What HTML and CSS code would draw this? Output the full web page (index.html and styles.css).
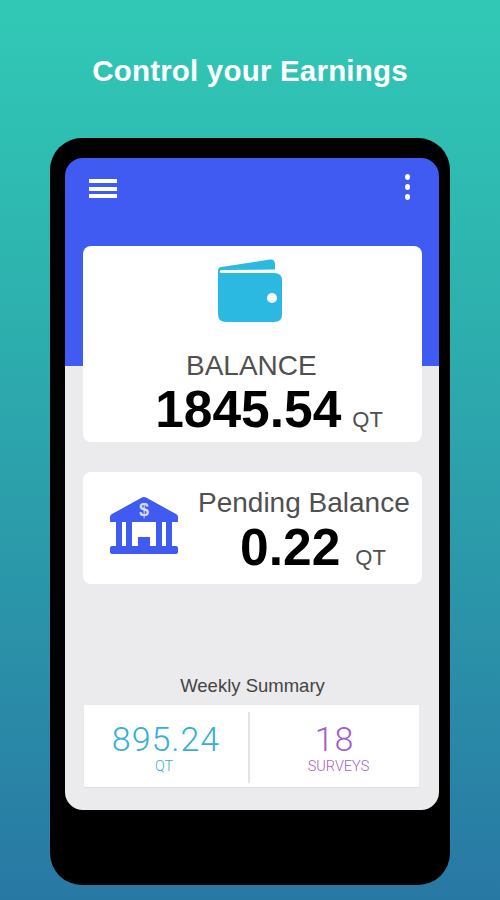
FILE: index.html
```html
<!DOCTYPE html>
<html lang="en">
<head>
	<meta charset="UTF-8">
	<meta name="viewport" content="width=device-width, initial-scale=1.0">
	<title>Control your Earnings</title>
	<link rel="stylesheet" href="styles.css">
</head>
<body>
	<h1 class="title">Control your Earnings</h1>
	<div class="phone">
		<div class="screen">
			<!-- top bar -->
			<div class="topbar">
				<div class="burger">
					<span></span>
					<span></span>
					<span></span>
				</div>
				<div class="dots">
					<span></span>
					<span></span>
					<span></span>
				</div>
			</div>
			<!-- balance -->
			<div class="card card_balance">
				<svg class="wallet" viewBox="0 0 64 64" width="64" height="64">
					<path fill="#2bb9e1" d="M0 11.500 Q0 8.500 3 8 L52 .6 Q56.500 0 57 5 V10.500 L4 11 Q1.500 11.200 1.500 12.500 Q1.500 14 4 14 H56 Q64 14 64 21 V56 Q64 63 56 63 H8 Q0 63 0 55 Z"/>
					<circle fill="#fff" cx="54" cy="39" r="5"/>
				</svg>
				<div class="balance_label">BALANCE</div>
				<div class="amount_row amount_row_big">
					<span class="amount">1845.54</span>
					<span class="unit">QT</span>
				</div>
			</div>
			<!-- pending -->
			<div class="card card_pending">
				<svg class="bank" viewBox="0 0 70 60" width="70" height="60">
					<path fill="#3f5bf2" d="M32 2 Q35 0 38 2 L67 18 Q69 19 69 21 V26 H1 V21 Q1 19 3 18 Z"/>
					<path fill="#3f5bf2" d="M7 26 H13 V52 H7 Z M17 26 H23 V52 H17 Z M47 26 H53 V52 H47 Z M57 26 H63 V52 H57 Z M29 41 H41 V52 H29 Z"/>
					<rect fill="#3f5bf2" x="1" y="50" width="68" height="8" rx="2"/>
					<text class="bank_sign" x="35" y="20" text-anchor="middle">$</text>
				</svg>
				<div class="pending_info">
					<div class="pending_label">Pending Balance</div>
					<div class="amount_row amount_row_small">
						<span class="amount">0.22</span>
						<span class="unit">QT</span>
					</div>
				</div>
			</div>
			<!-- weekly summary -->
			<div class="weekly_title">Weekly Summary</div>
			<div class="weekly">
				<div class="weekly_cell weekly_qt">
					<div class="weekly_num">895.24</div>
					<div class="weekly_sub">QT</div>
				</div>
				<div class="weekly_cell weekly_surveys">
					<div class="weekly_num">18</div>
					<div class="weekly_sub">SURVEYS</div>
				</div>
			</div>
		</div>
	</div>
</body>
</html>
```

FILE: styles.css
```css
* {
	padding: 0;
	margin: 0;
	box-sizing: border-box;
}
html, body {
	height: 900px;
	overflow: hidden;
}
body {
	background: linear-gradient(#31c9b6, #2db0ae 35%, #2878a4);
	font-family: "Liberation Sans", Arial, sans-serif;
	padding-top: 53px;
}
.title {
	color: #fff;
	font-size: 29.500px;
	font-weight: 700;
	line-height: 36px;
	letter-spacing: 0.200px;
	text-align: center;
}
/* phone frame */
.phone {
	width: 400px;
	height: 747px;
	margin: 49px 0 0 50px;
	padding: 20px 11px 0 15px;
	background: #000;
	border-radius: 32px;
}
.screen {
	height: 652px;
	padding: 0 17px 0 18px;
	border-radius: 18px;
	background: linear-gradient(#3f5bf2 208px, #ebeaec 208px);
	display: flex;
	flex-direction: column;
}
.topbar {
	height: 88px;
	padding: 16px 12px 0 6px;
	display: flex;
	justify-content: space-between;
	align-items: flex-start;
}
.burger {
	width: 28px;
	display: flex;
	flex-direction: column;
	gap: 3.500px;
	padding-top: 5px;
}
.burger span {
	height: 4px;
	background: #fff;
}
.dots {
	display: flex;
	flex-direction: column;
	gap: 4px;
}
.dots span {
	width: 5px;
	height: 6px;
	background: #fff;
	border-radius: 50%;
}
/* cards */
.card {
	width: 339px;
	background: #fff;
	border-radius: 8px;
}
.card_balance {
	height: 196px;
	padding-top: 13px;
	display: flex;
	flex-direction: column;
}
.wallet {
	align-self: center;
	margin-left: -5px;
}
.balance_label {
	margin: 27px 0 0 103px;
	font-size: 28px;
	line-height: 32px;
	color: #505050;
}
.amount_row {
	display: flex;
	align-items: baseline;
	justify-content: center;
	gap: 11px;
}
.amount_row_big {
	margin: -3px 0 0 33px;
}
.amount_row_small {
	margin: 3px 0 0 18px;
	gap: 15px;
}
.amount {
	font-size: 51.500px;
	line-height: 60px;
	font-weight: 700;
	color: #000;
}
.amount_row_small .amount {
	line-height: 50px;
}
.unit {
	font-size: 22px;
	color: #505050;
}
.card_pending {
	height: 112px;
	margin-top: 30px;
	display: flex;
	padding: 24px 0 0 26px;
}
.bank_sign {
	font-family: "Liberation Sans", Arial, sans-serif;
	font-size: 18px;
	font-weight: 700;
	fill: #d8def8;
}
.pending_info {
	width: 212px;
	margin: -9px 0 0 19px;
}
.pending_label {
	font-size: 28px;
	line-height: 32px;
	color: #505050;
	white-space: nowrap;
}
/* weekly */
.weekly_title {
	margin-top: 91px;
	font-size: 18.500px;
	line-height: 22px;
	color: #444;
	text-align: center;
}
.weekly {
	width: 335px;
	height: 83px;
	margin: 8px 0 0 1px;
	background: #fff;
	border-bottom: 1px solid #ddd;
	display: flex;
	padding: 7px 0 4px;
}
.weekly_cell {
	flex: 1;
	text-align: center;
	font-family: Roboto, sans-serif;
	font-weight: 300;
}
.weekly_qt {
	flex: 0 0 166px;
	border-right: 2px solid #e4e4e6;
	color: #36aed8;
}
.weekly_surveys {
	color: #a060cf;
}
.weekly_num {
	font-size: 34px;
	line-height: 34px;
	font-weight: 300;
	letter-spacing: 1px;
	margin-top: 10px;
}
.weekly_sub {
	font-size: 14.500px;
	line-height: 16px;
	margin-top: 3px;
}
.weekly_qt .weekly_sub {
	padding-right: 4px;
}
.weekly_surveys .weekly_sub {
	padding-left: 8px;
}
```
